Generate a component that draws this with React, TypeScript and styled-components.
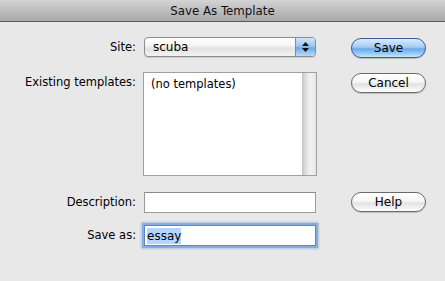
import React from 'react';
import styled, { createGlobalStyle } from 'styled-components';

const GlobalStyle = createGlobalStyle`
  html, body {
    margin: 0;
    padding: 0;
    background: #e8e8e8;
  }
  body {
    font-family: "DejaVu Sans", "Liberation Sans", sans-serif;
    font-size: 11.5px;
    color: #000;
  }
`;

const Window = styled.div`
  width: 445px;
  height: 281px;
  background: #e8e8e8;
  display: flex;
  flex-direction: column;
`;

const TitleBar = styled.div`
  height: 21px;
  border-bottom: 1px solid #5a5a5a;
  background: linear-gradient(#d4d4d4, #bdbdbd 50%, #a9a9a9);
  display: flex;
  align-items: center;
  justify-content: center;
  font-size: 11.8px;
  color: #111;
`;

const Form = styled.div`
  display: flex;
  flex-direction: column;
  padding-top: 15px;
`;

const Row = styled.div<{ $top?: number }>`
  display: grid;
  grid-template-columns: 144px 172px 1fr;
  align-items: start;
  margin-top: ${p => p.$top ?? 0}px;
`;

const Label = styled.div<{ $h: number }>`
  text-align: right;
  padding-right: 8px;
  line-height: ${p => p.$h}px;
  white-space: nowrap;
`;

const ButtonCol = styled.div<{ $dy?: number }>`
  padding-left: 35px;
  margin-top: ${p => p.$dy ?? 0}px;
`;

const Popup = styled.div`
  height: 18px;
  border: 1px solid #8c8c8c;
  border-radius: 4px;
  background: linear-gradient(#ffffff, #f4f4f4 45%, #e2e2e2 55%, #f2f2f2);
  display: flex;
  align-items: center;
  box-shadow: 0 1px 1px rgba(0, 0, 0, 0.12);
  overflow: hidden;
`;

const PopupText = styled.span`
  flex: 1;
  padding-left: 8px;
  font-size: 12px;
`;

const Stepper = styled.div`
  width: 19px;
  align-self: stretch;
  border-left: 1px solid #6c8fbf;
  background: linear-gradient(#cfe4fb, #9cc5f0 45%, #6faae8 55%, #b9dbfa);
  display: flex;
  flex-direction: column;
  align-items: center;
  justify-content: center;
  gap: 2px;
`;

const List = styled.div`
  height: 102px;
  width: 172px;
  margin-left: -1px;
  border: 1px solid #a0a0a0;
  background: #fff;
  display: flex;
`;

const ListBody = styled.div`
  flex: 1;
  padding: 4px 0 0 7px;
`;

const ScrollTrack = styled.div`
  width: 14px;
  background: linear-gradient(to right, #c4c4c4, #e2e2e2 30%, #f2f2f2 60%, #e6e6e6);
`;

const TextField = styled.div<{ $focus?: boolean }>`
  height: 19px;
  border: 1px solid #9a9a9a;
  border-top-color: #8a8a8a;
  background: #fff;
  display: flex;
  align-items: center;
  padding-left: 2px;
  font-size: 12px;
  ${p =>
    p.$focus &&
    `
    border-color: #5b86c8;
    box-shadow: 0 0 0 2px #86ace3, 0 0 2px 3px rgba(110, 155, 220, 0.45);
    margin-top: 1px;
  `}
`;

const Selected = styled.span`
  background: #b5d5ff;
  line-height: 16px;
`;

const AquaButton = styled.button<{ $default?: boolean }>`
  width: 75px;
  height: 20px;
  border-radius: 10px;
  font-family: inherit;
  font-size: 12px;
  color: #000;
  padding: 0;
  cursor: pointer;
  border: 1px solid ${p => (p.$default ? '#3c5b94' : '#6a6a6a')};
  background: ${p =>
    p.$default
      ? 'linear-gradient(#d7ebfd, #a6cdf4 45%, #6aa9ea 55%, #9fd0fb 85%, #cde9fe)'
      : 'linear-gradient(#ffffff, #f6f6f6 45%, #e2e2e2 55%, #f4f4f4 85%, #ffffff)'};
  box-shadow: 0 1px 1px rgba(0, 0, 0, 0.18);
`;

const Arrow = ({ up }: { up?: boolean }) => (
  <svg width="7" height="4" viewBox="0 0 7 4">
    <path d={up ? 'M3.5 0 L7 4 L0 4 Z' : 'M0 0 L7 0 L3.5 4 Z'} fill="#111" />
  </svg>
);

export default function App() {
  return (
    <>
      <GlobalStyle />
      <Window>
        <TitleBar>Save As Template</TitleBar>
        <Form>
          <Row>
            <Label $h={20}>Site:</Label>
            <Popup>
              <PopupText>scuba</PopupText>
              <Stepper>
                <Arrow up />
                <Arrow />
              </Stepper>
            </Popup>
            <ButtonCol $dy={1}>
              <AquaButton $default>Save</AquaButton>
            </ButtonCol>
          </Row>
          <Row $top={14}>
            <Label $h={20}>Existing templates:</Label>
            <List>
              <ListBody>(no templates)</ListBody>
              <ScrollTrack />
            </List>
            <ButtonCol $dy={1}>
              <AquaButton>Cancel</AquaButton>
            </ButtonCol>
          </Row>
          <Row $top={16}>
            <Label $h={21}>Description:</Label>
            <TextField />
            <ButtonCol>
              <AquaButton>Help</AquaButton>
            </ButtonCol>
          </Row>
          <Row $top={11}>
            <Label $h={22}>Save as:</Label>
            <TextField $focus>
              <Selected>essay</Selected>
            </TextField>
            <ButtonCol />
          </Row>
        </Form>
      </Window>
    </>
  );
}
